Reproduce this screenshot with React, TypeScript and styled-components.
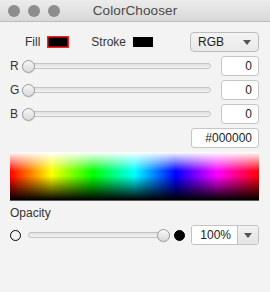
import * as React from 'react';
import styled, { createGlobalStyle } from 'styled-components';

const GlobalStyle = createGlobalStyle`
  html, body {
    margin: 0;
    padding: 0;
    background: #f3f3f3;
  }
  body {
    font-family: 'Liberation Sans', Arial, sans-serif;
    color: #262626;
  }
`;

const Window = styled.div`
  width: 270px;
  height: 292px;
  background: #f3f3f3;
  display: flex;
  flex-direction: column;
  overflow: hidden;
`;

const TitleBar = styled.div`
  height: 21px;
  display: grid;
  grid-template-columns: 1fr auto 1fr;
  align-items: center;
  background: linear-gradient(#ececec, #d8d8d8);
  border-bottom: 1px solid #bcbcbc;
`;

const Lights = styled.div`
  display: flex;
  gap: 8px;
  padding-left: 8px;
`;

const Light = styled.span`
  width: 12px;
  height: 12px;
  border-radius: 50%;
  background: #8d8c8f;
`;

const Title = styled.div`
  font-size: 13.5px;
  color: #4a4a4a;
  letter-spacing: 0.1px;
`;

const Content = styled.div`
  display: flex;
  flex-direction: column;
  gap: 4px;
  padding: 10px 11px 0 10px;
`;

const TopRow = styled.div`
  display: flex;
  align-items: center;
  height: 20px;
  padding-left: 15px;
`;

const Label = styled.span`
  font-size: 12px;
  color: #333;
`;

const Swatch = styled.span<{ $selected?: boolean }>`
  display: block;
  width: ${({ $selected }) => ($selected ? 22 : 20)}px;
  height: ${({ $selected }) => ($selected ? 12 : 10)}px;
  box-sizing: border-box;
  background: #000;
  box-shadow: ${({ $selected }) => ($selected ? 'inset 0 0 0 1.5px #ff1f1f' : 'none')};
  margin: 0 22px 0 7px;
`;

const Combo = styled.div`
  margin-left: auto;
  width: 69px;
  height: 20px;
  box-sizing: border-box;
  display: flex;
  align-items: center;
  justify-content: space-between;
  padding: 0 7px 0 7px;
  border: 1px solid #bcbcbc;
  border-radius: 4px;
  background: linear-gradient(#f4f4f4, #e9e9e9);
  font-size: 12px;
  color: #222;
`;

const Arrow = styled.span`
  width: 0;
  height: 0;
  border-left: 4px solid transparent;
  border-right: 4px solid transparent;
  border-top: 5px solid #555;
`;

const SliderRow = styled.div`
  display: flex;
  align-items: center;
  gap: 10px;
  height: 20px;
`;

const ChannelLabel = styled.span`
  width: 12px;
  margin-right: -10px;
  font-size: 12px;
  color: #333;
`;

const Track = styled.div`
  flex: 1;
  height: 13px;
  display: flex;
  align-items: center;
  position: relative;
  &::before {
    content: '';
    flex: 1;
    height: 4px;
    border: 1px solid #c4c4c4;
    border-radius: 3px;
    background: linear-gradient(#e2e2e2, #f2f2f2);
  }
`;

const Thumb = styled.span`
  position: absolute;
  top: 0;
  width: 13px;
  height: 13px;
  box-sizing: border-box;
  border-radius: 50%;
  border: 1px solid #9d9d9d;
  background: linear-gradient(#f7f7f7, #d9d9d9);
  box-shadow: 0 0.5px 1px rgba(0, 0, 0, 0.15);
`;

const Field = styled.div<{ $width: number }>`
  width: ${({ $width }) => $width}px;
  height: 20px;
  box-sizing: border-box;
  border: 1px solid #c6c6c6;
  border-radius: 3px;
  background: #fff;
  display: flex;
  align-items: center;
  justify-content: flex-end;
  padding-right: 6px;
  font-size: 12px;
  color: #222;
`;

const RightRow = styled.div`
  display: flex;
  justify-content: flex-end;
`;

const Spectrum = styled.div`
  height: 48px;
  border-bottom: 1px solid #5a5a5a;
  background:
    linear-gradient(rgba(255, 255, 255, 1) 0%, rgba(255, 255, 255, 0) 40%, rgba(0, 0, 0, 0) 50%, rgba(0, 0, 0, 1) 100%),
    linear-gradient(90deg, #f00 0%, #ff0 16.6%, #0f0 33.3%, #0ff 50%, #00f 66.6%, #f0f 83.3%, #f00 100%);
`;

const OpacityLabel = styled.div`
  font-size: 12px;
  color: #333;
  margin-top: 1px;
  height: 14px;
`;

const OpacityRow = styled.div`
  display: flex;
  align-items: center;
  height: 20px;
  margin-top: 1px;
`;

const OpacitySlider = styled.div`
  flex: 1;
  display: flex;
  margin: 0 4px 0 7px;
`;

const Dot = styled.span<{ $filled?: boolean }>`
  width: 11px;
  height: 11px;
  box-sizing: border-box;
  border-radius: 50%;
  border: 1.5px solid #000;
  background: ${({ $filled }) => ($filled ? '#000' : 'transparent')};
`;

const SpinCombo = styled.div`
  width: 68px;
  height: 20px;
  box-sizing: border-box;
  display: flex;
  border: 1px solid #c2c2c2;
  border-radius: 3px;
  overflow: hidden;
  margin-left: 6px;
`;

const SpinText = styled.div`
  flex: 1;
  background: #fff;
  display: flex;
  align-items: center;
  justify-content: flex-end;
  padding-right: 6px;
  font-size: 12px;
  color: #222;
`;

const SpinButton = styled.div`
  width: 20px;
  border-left: 1px solid #c2c2c2;
  background: linear-gradient(#f2f2f2, #e3e3e3);
  display: flex;
  align-items: center;
  justify-content: center;
`;

const Slider = ({ value }: { value: number }) => (
  <Track>
    <Thumb style={{ left: `calc(${value * 100}% - ${value * 13}px)` }} />
  </Track>
);

const channels = ['R', 'G', 'B'];

const App = () => {
  return (
    <Window>
      <GlobalStyle />
      <TitleBar>
        <Lights>
          <Light />
          <Light />
          <Light />
        </Lights>
        <Title>ColorChooser</Title>
        <div />
      </TitleBar>
      <Content>
        <TopRow>
          <Label>Fill</Label>
          <Swatch $selected />
          <Label>Stroke</Label>
          <Swatch />
          <Combo>
            RGB
            <Arrow />
          </Combo>
        </TopRow>
        {channels.map((c) => (
          <SliderRow key={c}>
            <ChannelLabel>{c}</ChannelLabel>
            <Slider value={0} />
            <Field $width={38}>0</Field>
          </SliderRow>
        ))}
        <RightRow>
          <Field $width={68}>#000000</Field>
        </RightRow>
        <Spectrum />
        <OpacityLabel>Opacity</OpacityLabel>
        <OpacityRow>
          <Dot />
          <OpacitySlider>
            <Slider value={1} />
          </OpacitySlider>
          <Dot $filled />
          <SpinCombo>
            <SpinText>100%</SpinText>
            <SpinButton>
              <Arrow />
            </SpinButton>
          </SpinCombo>
        </OpacityRow>
      </Content>
    </Window>
  );
};

export default App;
